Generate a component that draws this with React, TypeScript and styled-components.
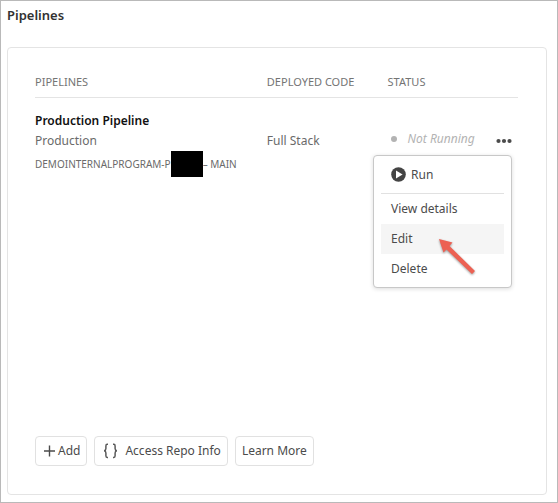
import React from 'react';
import styled, { createGlobalStyle } from 'styled-components';

const GlobalStyle = createGlobalStyle`
  *, *::before, *::after { box-sizing: border-box; }
  body {
    margin: 0;
    background: #fff;
    color: #4b4b4b;
    font-family: 'Noto Sans', 'Open Sans', sans-serif;
    font-size: 12px;
    line-height: 20px;
  }
  button { font: inherit; color: inherit; cursor: pointer; }
`;

const Page = styled.main`
  display: flex;
  flex-direction: column;
  gap: 22px;
  min-height: 100vh;
  padding: 4px 10px 7px 6px;
  border: 1px solid #b9b9b9;
`;

const Title = styled.h1`
  margin: 0;
  font-size: 13px;
  font-weight: 600;
  color: #323232;
`;

const Card = styled.section`
  flex: 1;
  display: flex;
  flex-direction: column;
  padding: 24px 28px 28px 27px;
  border: 1px solid #e4e4e4;
  border-radius: 4px;
`;

const Table = styled.table`
  width: 100%;
  table-layout: fixed;
  border-collapse: collapse;
`;

const HeadCell = styled.th<{ $width: string }>`
  width: ${(p) => p.$width};
  padding: 0 0 5px;
  border-bottom: 1px solid #e4e4e4;
  font-size: 11px;
  font-weight: 400;
  text-align: left;
  color: #747474;
`;

const Cell = styled.td<{ $top: number }>`
  padding: ${(p) => p.$top}px 0 0;
  vertical-align: top;
  color: #6a6a6a;
`;

const PipelineName = styled.div`
  font-weight: 600;
  color: #111;
`;

const Repo = styled.div`
  display: flex;
  align-items: center;
  font-size: 10px;
  white-space: nowrap;
`;

const Redacted = styled.span`
  width: 32px;
  height: 26px;
  background: #000;
`;

const StatusLine = styled.div`
  display: flex;
  align-items: flex-start;
  padding: 0 6px 0 3px;
`;

const Status = styled.span`
  display: flex;
  align-items: center;
  gap: 11px;
  line-height: 16px;
  font-style: italic;
  color: #b3b3b3;
  white-space: nowrap;

  &::before {
    content: '';
    width: 6px;
    height: 6px;
    border-radius: 50%;
    background: #b3b3b3;
  }
`;

const MenuAnchor = styled.div`
  position: relative;
  margin-left: auto;
`;

const MoreButton = styled.button`
  display: flex;
  align-items: center;
  height: 20px;
  padding: 0;
  border: 0;
  background: none;
  color: #4b4b4b;
`;

const Menu = styled.div`
  position: absolute;
  top: 24px;
  right: 0;
  width: 139px;
  padding: 0 7px 3px;
  border: 1px solid #c8c8c8;
  border-radius: 4px;
  background: #fff;
  box-shadow: 0 1px 4px rgba(0, 0, 0, 0.14);
`;

const MenuItem = styled.button<{ $active?: boolean; $tall?: boolean }>`
  display: flex;
  align-items: center;
  gap: 5px;
  width: 100%;
  height: ${(p) => (p.$tall ? 37 : 30)}px;
  padding: 0 10px;
  border: 0;
  background: ${(p) => (p.$active ? '#f5f5f5' : 'transparent')};
  color: #4b4b4b;
`;

const Divider = styled.hr`
  height: 1px;
  margin: 0;
  border: 0;
  background: #e1e1e1;
`;

const Pointer = styled.svg`
  position: absolute;
  top: 82px;
  left: 64px;
  pointer-events: none;
  filter: drop-shadow(0 1px 1px rgba(0, 0, 0, 0.4));
`;

const Actions = styled.footer`
  display: flex;
  gap: 7px;
  margin-top: auto;
`;

const ActionButton = styled.button<{ $gap?: number }>`
  display: flex;
  align-items: center;
  gap: ${(p) => p.$gap ?? 0}px;
  height: 30px;
  padding: 0 6px;
  border: 1px solid #e1e1e1;
  border-radius: 4px;
  background: #fff;
  white-space: nowrap;
`;

const MoreIcon = () => (
  <svg width="16" height="6" viewBox="0 0 16 6" fill="currentColor" aria-hidden="true">
    <circle cx="2.5" cy="3" r="2.1" />
    <circle cx="8" cy="3" r="2.1" />
    <circle cx="13.5" cy="3" r="2.1" />
  </svg>
);

const RunIcon = () => (
  <svg width="15" height="15" viewBox="0 0 15 15" aria-hidden="true">
    <circle cx="7.5" cy="7.5" r="7.3" fill="#444" />
    <path d="M5 3.4v8.2l6.6-4.1z" fill="#fff" />
  </svg>
);

const PlusIcon = () => (
  <svg width="14" height="12" viewBox="0 0 14 12" aria-hidden="true">
    <path d="M7.5 0.5v11M2 6h11" stroke="#4b4b4b" strokeWidth="1.4" />
  </svg>
);

const BracesIcon = () => (
  <svg width="18" height="16" viewBox="0 0 18 16" fill="none" stroke="#5a5a5a" strokeWidth="1.5" aria-hidden="true">
    <path d="M7 1.2H6.200Q4.900 1.200 4.900 2.900V5.600Q4.900 7.600 3.100 7.800Q4.900 8 4.900 10V12.700Q4.900 14.400 6.200 14.400H7" />
    <path d="M12 1.2h.8Q14.100 1.200 14.100 2.900V5.600Q14.100 7.600 15.900 7.800Q14.100 8 14.100 10V12.700Q14.100 14.400 12.800 14.400h-.8" />
  </svg>
);

export default function App() {
  return (
    <>
      <GlobalStyle />
      <Page>
        <Title>Pipelines</Title>
        <Card>
          <Table>
            <thead>
              <tr>
                <HeadCell scope="col" $width="48%">PIPELINES</HeadCell>
                <HeadCell scope="col" $width="25%">DEPLOYED CODE</HeadCell>
                <HeadCell scope="col" $width="27%">STATUS</HeadCell>
              </tr>
            </thead>
            <tbody>
              <tr>
                <Cell $top={13}>
                  <PipelineName>Production Pipeline</PipelineName>
                  <div>Production</div>
                  <Repo>
                    DEMOINTERNALPROGRAM-P
                    <Redacted />
                    –&nbsp;MAIN
                  </Repo>
                </Cell>
                <Cell $top={33}>Full Stack</Cell>
                <Cell $top={33}>
                  <StatusLine>
                    <Status>Not Running</Status>
                    <MenuAnchor>
                      <MoreButton type="button" aria-label="More options" aria-haspopup="menu" aria-expanded="true">
                        <MoreIcon />
                      </MoreButton>
                      <Menu role="menu">
                        <MenuItem type="button" role="menuitem" $tall>
                          <RunIcon />
                          Run
                        </MenuItem>
                        <Divider />
                        <MenuItem type="button" role="menuitem">View details</MenuItem>
                        <MenuItem type="button" role="menuitem" $active>Edit</MenuItem>
                        <MenuItem type="button" role="menuitem">Delete</MenuItem>
                        <Pointer width="40" height="40" viewBox="0 0 40 40" aria-hidden="true">
                          <path d="M1 1L14.500 4.500L11.500 8L37 33L34 36L8.500 11.500L5.500 14.500Z" fill="#ec6153" />
                        </Pointer>
                      </Menu>
                    </MenuAnchor>
                  </StatusLine>
                </Cell>
              </tr>
            </tbody>
          </Table>
          <Actions>
            <ActionButton type="button" $gap={2}>
              <PlusIcon />
              Add
            </ActionButton>
            <ActionButton type="button" $gap={6}>
              <BracesIcon />
              Access Repo Info
            </ActionButton>
            <ActionButton type="button">Learn More</ActionButton>
          </Actions>
        </Card>
      </Page>
    </>
  );
}
